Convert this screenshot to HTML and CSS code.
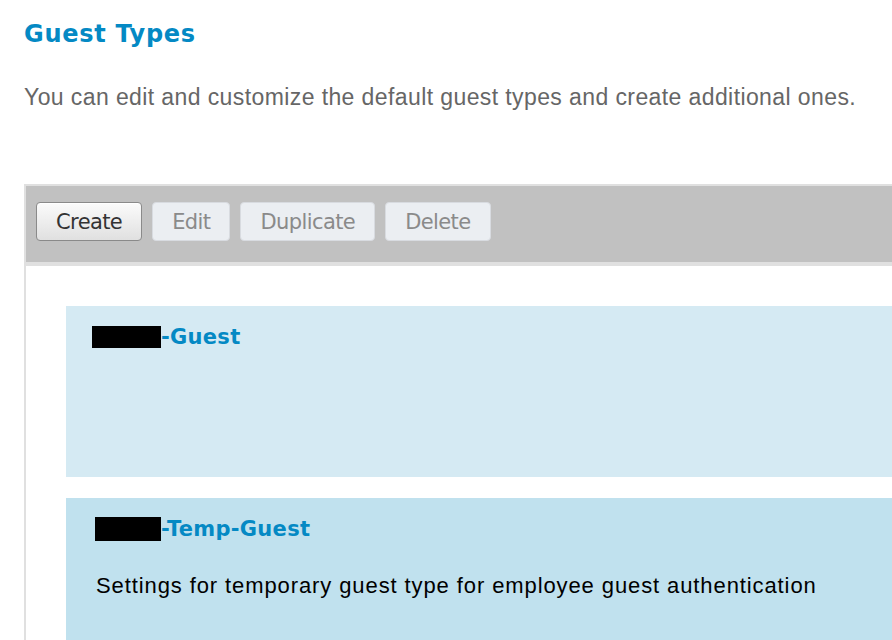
FILE: index.html
```html
<!DOCTYPE html>
<html>
<head>
<meta charset="utf-8">
<link rel="stylesheet" href="styles.css">
</head>
<body>
<div class="page">
  <h1 class="title">Guest Types</h1>
  <p class="intro">You can edit and customize the default guest types and create additional ones.</p>
  <div class="panel">
    <div class="toolbar">
      <button class="btn btn-active">Create</button>
      <button class="btn btn-disabled">Edit</button>
      <button class="btn btn-disabled">Duplicate</button>
      <button class="btn btn-disabled">Delete</button>
    </div>
    <div class="list">
      <div class="card card-a">
        <div class="card-title"><span class="redact redact-a"></span>-Guest</div>
      </div>
      <div class="card card-b">
        <div class="card-title"><span class="redact redact-b"></span>-Temp-Guest</div>
        <div class="card-desc">Settings for temporary guest type for employee guest authentication</div>
      </div>
    </div>
  </div>
</div>
</body>
</html>
```
FILE: styles.css
```css
html, body {
  margin: 0;
  padding: 0;
  background: #ffffff;
  overflow: hidden;
}
.page {
  padding-left: 24px;
  width: 900px;
}
.title {
  margin: 0;
  padding-top: 18px;
  font-family: "DejaVu Sans", Verdana, sans-serif;
  font-weight: bold;
  font-size: 24px;
  line-height: 32px;
  color: #0489c4;
  letter-spacing: 0.7px;
}
.intro {
  margin: 0;
  padding-top: 34px;
  font-family: "Liberation Sans", Arial, sans-serif;
  font-size: 23px;
  line-height: 26px;
  color: #666666;
  letter-spacing: 0.4px;
  white-space: nowrap;
}
.panel {
  margin-top: 74px;
  border-top: 2px solid #e0e0e0;
  border-left: 2px solid #e0e0e0;
}
.toolbar {
  box-sizing: border-box;
  background: #c1c1c1;
  border-bottom: 4px solid #e0e0e0;
  height: 80px;
  padding: 16px 10px 0;
  display: flex;
  gap: 10px;
  align-items: flex-start;
}
.btn {
  height: 39px;
  box-sizing: border-box;
  border-radius: 4px;
  font-family: "DejaVu Sans", Tahoma, sans-serif;
  font-size: 21px;
  letter-spacing: -0.6px;
  padding: 0 19px;
  margin: 0;
}
.btn-active {
  background: linear-gradient(#fbfbfb, #e0e0e0);
  border: 1px solid #8a8a8a;
  color: #333333;
  box-shadow: inset 0 1px 0 #ffffff;
}
.btn-disabled {
  background: #ebeef2;
  border: 1px solid #d8dbe0;
  color: #8a8a8a;
}
.list {
  padding: 40px 0 0 40px;
  display: flex;
  flex-direction: column;
  gap: 21px;
}
.card {
  height: 171px;
  box-sizing: border-box;
  padding-top: 18px;
}
.card-a {
  background: #d5eaf3;
  padding-left: 26px;
}
.card-b {
  background: #c0e1ee;
  padding-left: 29px;
}
.card-title {
  font-family: "DejaVu Sans", Verdana, sans-serif;
  font-weight: bold;
  font-size: 21px;
  line-height: 26px;
  color: #0489c4;
  letter-spacing: 0.3px;
  display: flex;
  align-items: center;
}
.redact {
  display: inline-block;
  background: #000000;
}
.redact-a { width: 69px; height: 22px; }
.redact-b { width: 66px; height: 24px; }
.card-desc {
  margin-top: 31px;
  padding-left: 1px;
  font-family: "Liberation Sans", Arial, sans-serif;
  font-size: 22px;
  line-height: 26px;
  color: #000000;
  letter-spacing: 0.9px;
  white-space: nowrap;
}
```
